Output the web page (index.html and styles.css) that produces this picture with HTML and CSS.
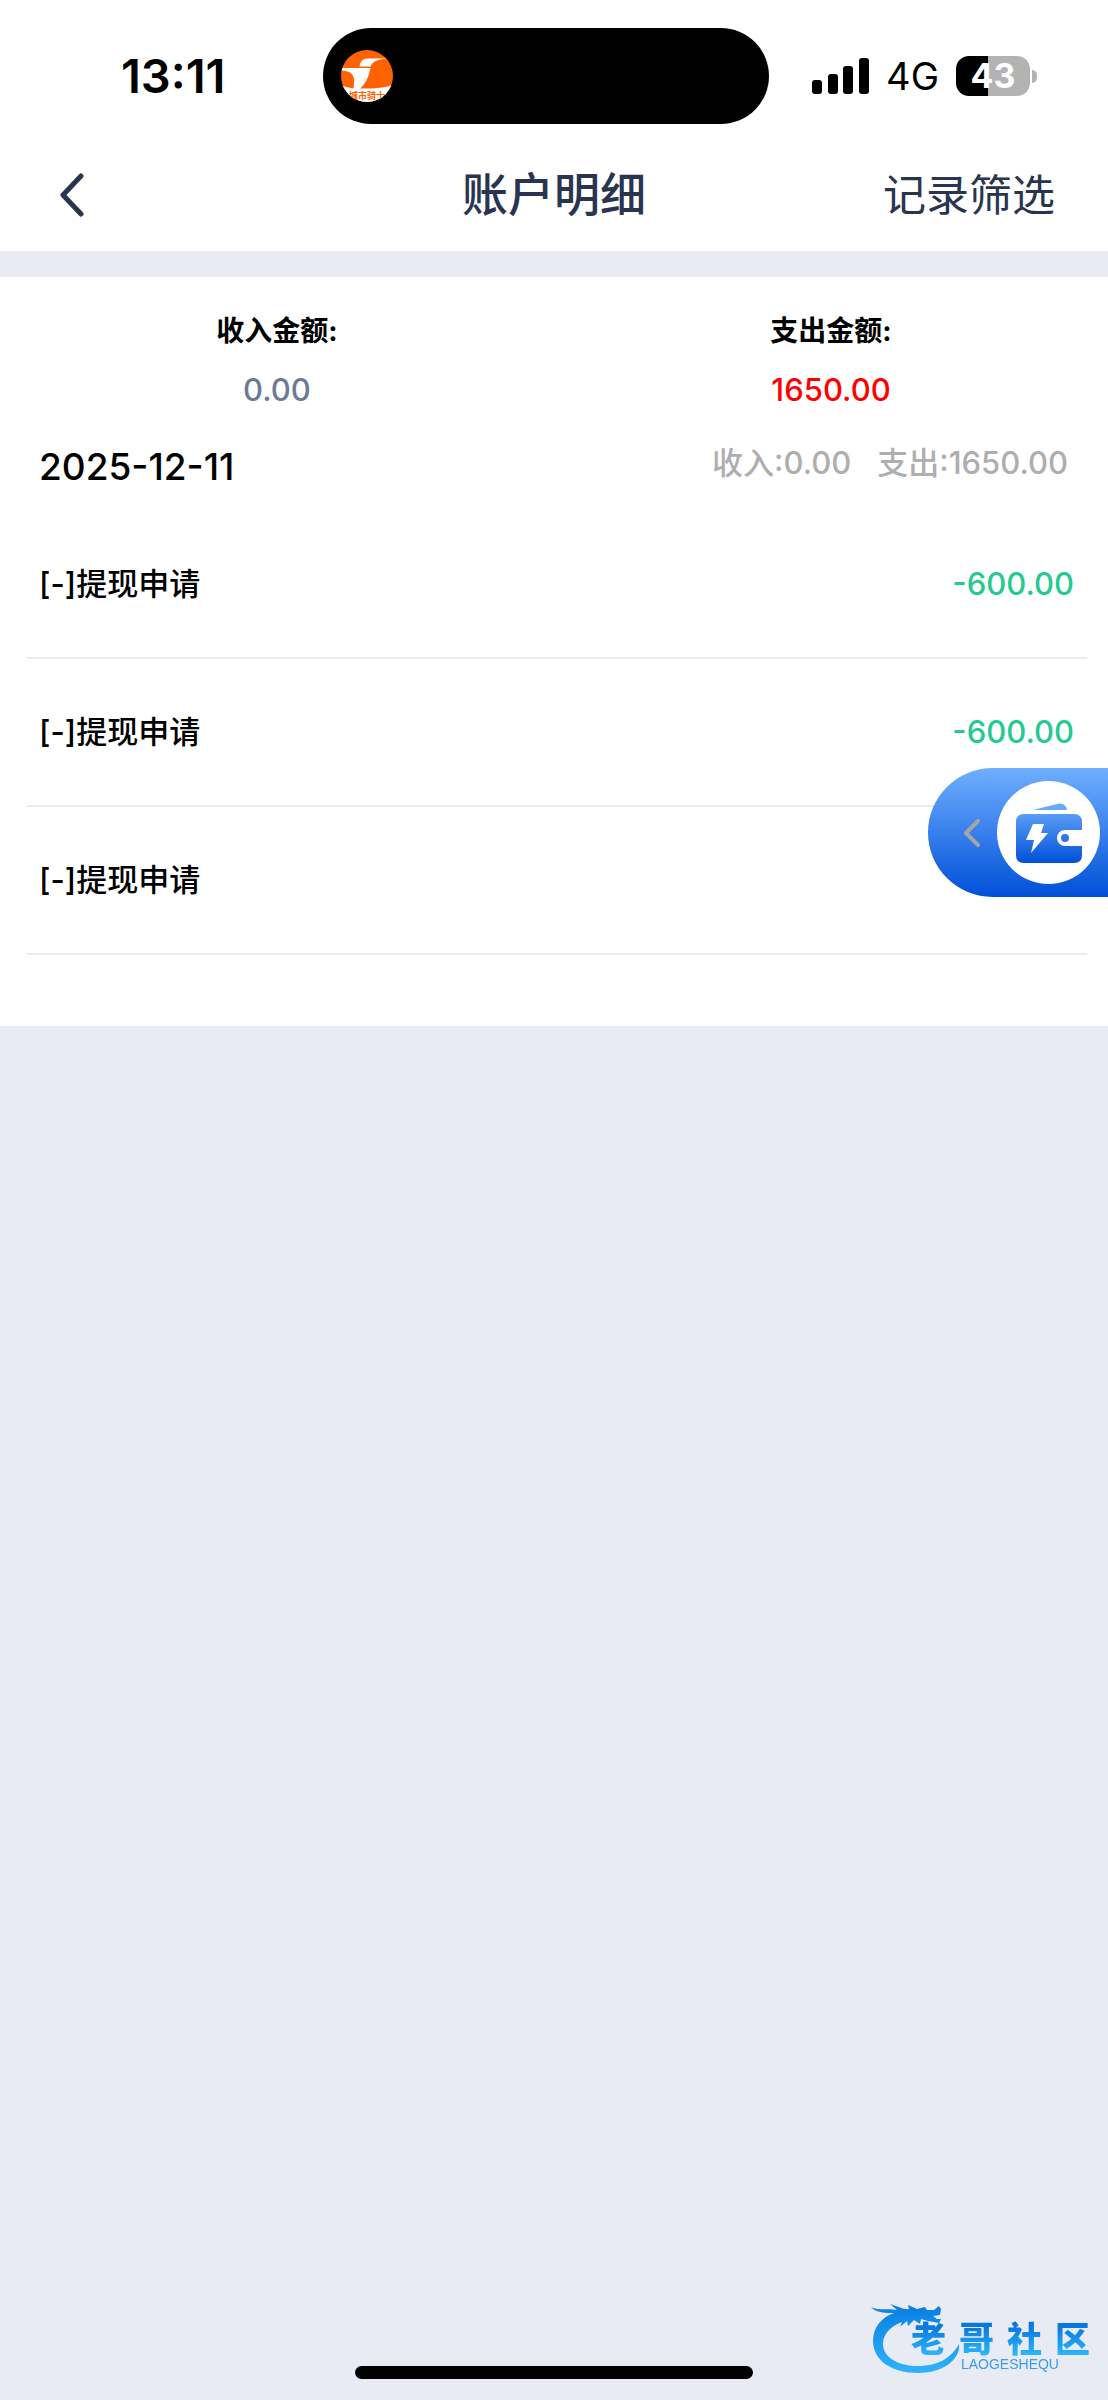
FILE: index.html
```html
<!DOCTYPE html>
<html lang="zh-CN">
<head>
<meta charset="utf-8">
<meta name="viewport" content="width=device-width, initial-scale=1">
<title>账户明细</title>
<link rel="stylesheet" href="styles.css">
</head>
<body>
<div class="status-bar">
  <time class="clock">13:11</time>
  <div class="island">
    <svg class="app-logo" viewBox="0 0 52 52" aria-hidden="true">
      <defs><clipPath id="logo-clip"><circle cx="26" cy="26" r="26"/></clipPath></defs>
      <g clip-path="url(#logo-clip)">
        <rect width="52" height="52" fill="#ff6200"/>
        <path d="M18.500 16.500C19.500 10 23 8.500 28 8.500L46 8.500C36 10 32 11 29.500 16.500Z" fill="#fff"/>
        <path d="M0 18H29.500L28 24C26 31 22 36 19 38.500C31 39 42 38 52 35V52H0V35Q6 38 12.500 38.500C14 28 14 21 0 20.500Z" fill="#fff"/>
        <text class="logo-text" x="26" y="49" text-anchor="middle">城市骑士</text>
      </g>
    </svg>
  </div>
  <div class="indicators">
    <svg class="signal" viewBox="0 0 57 36" aria-hidden="true">
      <rect x="0" y="22" width="10" height="14" rx="3"/>
      <rect x="16" y="16" width="10" height="20" rx="3"/>
      <rect x="31" y="8" width="10" height="28" rx="3"/>
      <rect x="47" y="0" width="10" height="36" rx="3"/>
    </svg>
    <span class="network">4G</span>
    <div class="battery"><span class="level">43</span><span class="nub"></span></div>
  </div>
</div>

<header class="nav">
  <button class="back" type="button" aria-label="返回">
    <svg viewBox="0 0 24 44" aria-hidden="true"><path d="M21 3L3 22L21 41"/></svg>
  </button>
  <h1 class="title">账户明细</h1>
  <button class="filter" type="button">记录筛选</button>
</header>

<main class="records">
  <dl class="totals">
    <div><dt>收入金额:</dt><dd class="income">0.00</dd></div>
    <div><dt>支出金额:</dt><dd class="expense">1650.00</dd></div>
  </dl>
  <div class="day">
    <h2 class="date">2025-12-11</h2>
    <p class="day-totals"><span>收入:0.00</span><span>支出:1650.00</span></p>
  </div>
  <ul class="list">
    <li><span>[-]提现申请</span><span class="amount">-600.00</span></li>
    <li><span>[-]提现申请</span><span class="amount">-600.00</span></li>
    <li><span>[-]提现申请</span></li>
  </ul>
</main>

<button class="wallet" type="button" aria-label="钱包">
  <svg class="wallet-arrow" viewBox="0 0 16 28" aria-hidden="true"><path d="M14 2L2 14L14 26"/></svg>
  <span class="wallet-disc">
    <svg viewBox="0 0 66 60" aria-hidden="true">
      <defs>
        <linearGradient id="wallet-fill" x1="0" y1="0" x2="0" y2="1">
          <stop offset="0" stop-color="#5a9df5"/><stop offset="1" stop-color="#0050d8"/>
        </linearGradient>
      </defs>
      <path d="M17 7L41 1C46 -1 51 3 51 7Z" fill="#68aaf9"/>
      <path d="M8 11H58Q66 11 66 19V27H49A8 8 0 0 0 49 43H66V52Q66 60 58 60H8Q0 60 0 52V19Q0 11 8 11Z" fill="url(#wallet-fill)"/>
      <circle cx="49" cy="35" r="4" fill="#2f76e4"/>
      <path d="M17 21H28L25 30H32L15 50L18 37H10Z" fill="#fff"/>
    </svg>
  </span>
</button>

<div class="watermark">
  <svg class="dragon" viewBox="0 0 90 76" aria-hidden="true">
    <defs>
      <linearGradient id="dragon-fill" x1="0" y1="0" x2="0" y2="1">
        <stop offset="0" stop-color="#087de2"/><stop offset="1" stop-color="#2fb4fb"/>
      </linearGradient>
    </defs>
    <path fill="url(#dragon-fill)" d="M0 9C8 13 18 10 26 12L19 6C28 9 34 12 38 11L37 7L46 11L54 9L56 12L63 12L68 8L70 11L69 17L62 18L66 21H70L68 25L57 23L50 21L49 26L43 22L37 28L36 23L29 29L31 24C18 29 12 37 12 46C12 60 28 68 47 68C68 68 81 59 88 46C90 61 72 75 48 75C20 75 2 62 2 43C2 29 11 19 23 15C15 15 5 15 0 9Z"/>
  </svg>
  <div class="brand">
    <div class="brand-name"><span>老</span><span>哥</span><span>社</span><span>区</span></div>
    <div class="brand-latin">LAOGESHEQU</div>
  </div>
</div>
<div class="home-indicator"></div>
</body>
</html>
```
FILE: styles.css
```css
* { box-sizing: border-box; margin: 0; padding: 0; }

body {
  min-height: 100vh;
  background: #e8ebf4;
  color: #000;
  font-family: Inter, "Noto Sans CJK SC", sans-serif;
  font-size: 31px;
  line-height: 40px;
}

button { border: 0; background: none; color: inherit; font: inherit; cursor: pointer; }
svg { display: block; }

/* Status bar */
.status-bar {
  display: grid;
  grid-template-columns: minmax(0, 1fr) 446px minmax(0, 1fr);
  align-items: center;
  padding: 28px 17px 0 0;
  background: #fff;
}
.clock { padding-left: 24px; text-align: center; font-size: 47px; font-weight: 600; }
.island {
  display: flex;
  align-items: center;
  height: 96px;
  padding-left: 18px;
  border-radius: 48px;
  background: #000;
}
.app-logo { width: 52px; height: 52px; }
.logo-text { fill: #ff6200; font-size: 9px; font-weight: 700; }
.indicators { display: flex; align-items: center; justify-content: flex-end; padding-right: 54px; }
.signal { width: 57px; height: 36px; margin-right: 17px; }
.network { margin-right: 17px; font-size: 38px; }
.battery { display: flex; align-items: center; gap: 2px; }
.level {
  width: 74px;
  border-radius: 13px;
  background: linear-gradient(to right, #000 43%, #b3b3b3 43%);
  color: #fff;
  font-size: 34px;
  font-weight: 700;
  text-align: center;
}
.nub { width: 5px; height: 13px; border-radius: 0 6px 6px 0; background: #b3b3b3; }

/* Navigation */
.nav {
  display: grid;
  grid-template-columns: 1fr auto 1fr;
  align-items: center;
  padding: 33px 53px 19px;
  background: #fff;
  color: #29344f;
}
.back { justify-self: start; padding-left: 7px; }
.back svg { width: 24px; height: 44px; }
.back path { fill: none; stroke: #29344f; stroke-width: 5; stroke-linecap: round; stroke-linejoin: round; }
.title { font-size: 46px; font-weight: 500; line-height: 75px; }
.filter { justify-self: end; font-size: 43px; }

/* Records */
.records { margin-top: 26px; padding-bottom: 71px; background: #fff; }
.totals { display: grid; grid-template-columns: 1fr 1fr; padding-top: 34px; text-align: center; }
.totals dt { font-size: 28px; font-weight: 700; }
.totals dd { margin-top: 19px; font-weight: 500; }
.income { color: #6b7a96; }
.expense { color: #f00; }
.day { display: flex; justify-content: space-between; align-items: flex-start; padding: 33px 40px 0 39px; }
.date { font-size: 37px; font-weight: 500; line-height: 48px; }
.day-totals { display: flex; gap: 26px; color: #aeaeae; font-weight: 500; }
.list { margin: 20px 21px 0 26px; list-style: none; }
.list li {
  display: flex;
  justify-content: space-between;
  align-items: center;
  height: 148px;
  padding: 0 13px;
  border-bottom: 2px solid #ebebeb;
  font-weight: 500;
}
.amount { color: #26c98f; }

/* Floating wallet shortcut */
.wallet {
  position: fixed;
  top: 768px;
  right: 0;
  display: flex;
  align-items: center;
  gap: 17px;
  padding: 13px 8px 13px 36px;
  border-radius: 65px 0 0 65px;
  background: linear-gradient(#70afff, #0050d8);
}
.wallet-arrow { width: 16px; height: 28px; }
.wallet-arrow path { fill: none; stroke: #a5a5a5; stroke-width: 4; stroke-linecap: round; stroke-linejoin: round; }
.wallet-disc {
  display: flex;
  align-items: center;
  justify-content: center;
  width: 103px;
  height: 103px;
  border-radius: 50%;
  background: #fff;
}
.wallet-disc svg { width: 66px; height: 60px; }

/* Community mark */
.watermark { position: fixed; right: 18px; bottom: 26px; display: flex; }
.dragon { width: 90px; height: 76px; }
.brand { margin-top: 23px; margin-left: -50px; }
.brand-name {
  display: flex;
  gap: 13px;
  background: linear-gradient(#0878df 15%, #2bb3fb 90%);
  background-clip: text;
  color: transparent;
  font-size: 35px;
  font-weight: 900;
  line-height: 36px;
}
.brand-latin { padding-left: 50px; color: #3b9ceb; font-family: "Liberation Sans", Arial, sans-serif; font-size: 14px; line-height: 14px; }

.home-indicator {
  position: fixed;
  bottom: 21px;
  left: 50%;
  width: 398px;
  height: 13px;
  margin-left: -199px;
  border-radius: 7px;
  background: #000;
}
```
